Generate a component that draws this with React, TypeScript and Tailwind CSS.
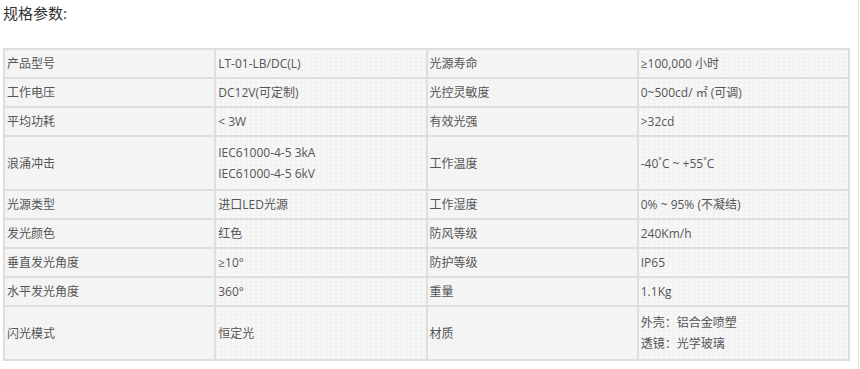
const rows: { label: string; value: string[]; label2: string; value2: string[]; tall?: boolean }[] = [
  { label: "产品型号", value: ["LT-01-LB/DC(L)"], label2: "光源寿命", value2: ["≥100,000 小时"] },
  { label: "工作电压", value: ["DC12V(可定制)"], label2: "光控灵敏度", value2: ["0~500cd/ ㎡ (可调)"] },
  { label: "平均功耗", value: ["< 3W"], label2: "有效光强", value2: [">32cd"] },
  {
    label: "浪涌冲击",
    value: ["IEC61000-4-5 3kA", "IEC61000-4-5 6kV"],
    label2: "工作温度",
    value2: ["-40˚C ~ +55˚C"],
    tall: true,
  },
  { label: "光源类型", value: ["进口LED光源"], label2: "工作湿度", value2: ["0% ~ 95% (不凝结)"] },
  { label: "发光颜色", value: ["红色"], label2: "防风等级", value2: ["240Km/h"] },
  { label: "垂直发光角度", value: ["≥10°"], label2: "防护等级", value2: ["IP65"] },
  { label: "水平发光角度", value: ["360°"], label2: "重量", value2: ["1.1Kg"] },
  {
    label: "闪光模式",
    value: ["恒定光"],
    label2: "材质",
    value2: ["外壳：铝合金喷塑", "透镜：光学玻璃"],
    tall: true,
  },
];

const labelCell = "border-2 border-[#dedede] bg-[#f4f4f4] px-[2px] align-middle";
const valueCell =
  "border-2 border-[#dedede] bg-[#f3f3f3] bg-[radial-gradient(circle,#fbfbfb_1px,transparent_1.2px)] bg-[length:5px_4px] px-[2px] align-middle";

function Lines({ items }: { items: string[] }) {
  return (
    <>
      {items.map((t) => (
        <p key={t} className="leading-[21px] whitespace-pre">
          {t}
        </p>
      ))}
    </>
  );
}

export default function App() {
  return (
    <div className="w-[860px] h-[369px] bg-white flex font-['Open_Sans','Noto_Sans_CJK_SC',sans-serif]">
      <div className="w-[858px] pl-[3px] pt-[3px]">
        {/* Title */}
        <h3 className="text-[15px] leading-[20px] text-[#333] font-normal">规格参数:</h3>

        <table className="mt-[25px] w-[847px] border-collapse table-fixed text-[12px] text-[#555]">
          <tbody>
            {rows.map((r) => {
              const py = r.tall ? "py-[5px]" : "py-[3px]";
              return (
                <tr key={r.label}>
                  <td className={`${labelCell} ${py}`}>
                    <Lines items={[r.label]} />
                  </td>
                  <td className={`${valueCell} ${py}`}>
                    <Lines items={r.value} />
                  </td>
                  <td className={`${labelCell} ${py}`}>
                    <Lines items={[r.label2]} />
                  </td>
                  <td className={`${valueCell} ${py}`}>
                    <Lines items={r.value2} />
                  </td>
                </tr>
              );
            })}
          </tbody>
        </table>
      </div>
      {/* right scroll track line */}
      <div className="w-[2px] h-full border-l border-[#e6e6e6]" />
    </div>
  );
}
